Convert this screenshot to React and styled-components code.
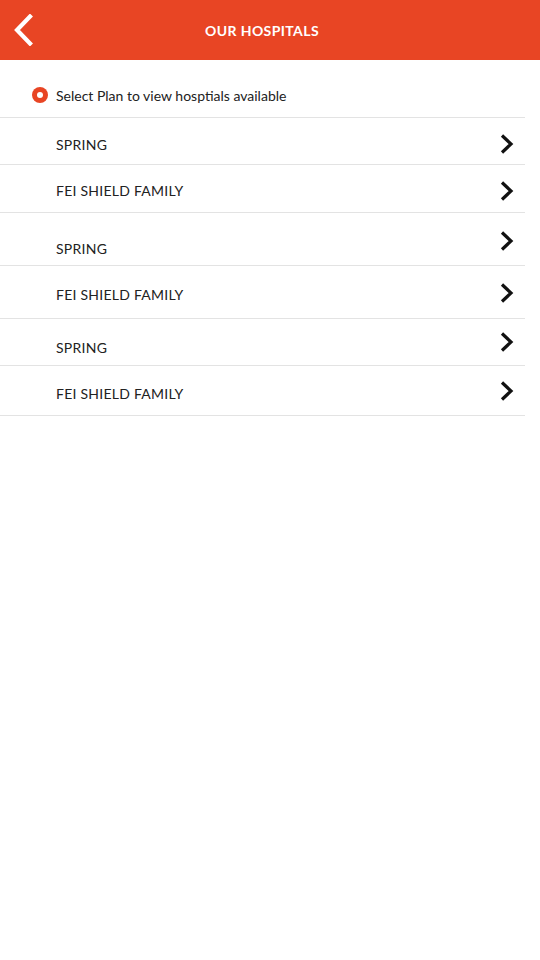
import React from "react";
import styled, { createGlobalStyle } from "styled-components";

const Global = createGlobalStyle`
  html, body { margin: 0; padding: 0; background: #fff; }
  body { font-family: Lato, "Open Sans", sans-serif; }
`;

const Page = styled.div`
  width: 540px;
  min-height: 960px;
  background: #fff;
`;

const Header = styled.header`
  height: 60px;
  background: #e84524;
  display: flex;
  align-items: center;
`;

const BackButton = styled.button`
  width: 48px;
  height: 60px;
  border: 0;
  padding: 0 0 0 12px;
  background: transparent;
  display: flex;
  align-items: center;
  cursor: pointer;
`;

const Title = styled.h1`
  flex: 1;
  margin: 0;
  padding-right: 64px;
  text-align: center;
  color: #fff;
  font-size: 14px;
  font-weight: 700;
  letter-spacing: 0.4px;
`;

const Notice = styled.div`
  height: 57px;
  display: flex;
  align-items: center;
  gap: 8px;
  padding-left: 32px;
  padding-top: 13px;
  box-sizing: border-box;
  font-size: 14px;
  color: #222;
`;

const Radio = styled.span`
  width: 16px;
  height: 16px;
  border-radius: 50%;
  background: #e84524;
  display: flex;
  align-items: center;
  justify-content: center;
  &::after {
    content: "";
    width: 6px;
    height: 6px;
    border-radius: 50%;
    background: #fff;
  }
`;

const List = styled.ul`
  list-style: none;
  margin: 0;
  padding: 0;
  width: 525px;
  border-top: 1px solid #e3e3e3;
`;

const Row = styled.li`
  height: ${(p) => p.$h}px;
  box-sizing: border-box;
  border-bottom: 1px solid #e3e3e3;
  display: flex;
  align-items: flex-start;
  justify-content: space-between;
  padding-left: 56px;
  padding-right: 8px;
`;

const RowText = styled.span`
  padding-top: ${(p) => p.$t}px;
  font-size: 14px;
  line-height: 17px;
  letter-spacing: 0.25px;
  color: #222;
`;

const Chevron = styled.span`
  padding-top: ${(p) => p.$t}px;
  display: flex;
`;

const rows = [
  { name: "SPRING", h: 47, t: 18, c: 16 },
  { name: "FEI SHIELD FAMILY", h: 48, t: 17, c: 16 },
  { name: "SPRING", h: 53, t: 27, c: 18 },
  { name: "FEI SHIELD FAMILY", h: 53, t: 20, c: 17 },
  { name: "SPRING", h: 47, t: 20, c: 13 },
  { name: "FEI SHIELD FAMILY", h: 50, t: 19, c: 15 },
];

export default function App() {
  return (
    <Page>
      <Global />
      <Header>
        <BackButton aria-label="Back">
          <svg width="24" height="32" viewBox="0 0 24 32">
            <path d="M18 2.5 L5 16 L18 29.5" fill="none" stroke="#fff" strokeWidth="4.2" strokeLinecap="square" strokeLinejoin="miter" />
          </svg>
        </BackButton>
        <Title>OUR HOSPITALS</Title>
      </Header>
      <Notice>
        <Radio />
        Select Plan to view hosptials available
      </Notice>
      <List>
        {rows.map((r, i) => (
          <Row key={i} $h={r.h}>
            <RowText $t={r.t}>{r.name}</RowText>
            <Chevron $t={r.c}>
              <svg width="20" height="20" viewBox="0 0 20 20">
                <path d="M5 1.5 L14 10 L5 18.5" fill="none" stroke="#111" strokeWidth="3.2" strokeLinecap="butt" strokeLinejoin="miter" />
              </svg>
            </Chevron>
          </Row>
        ))}
      </List>
    </Page>
  );
}
